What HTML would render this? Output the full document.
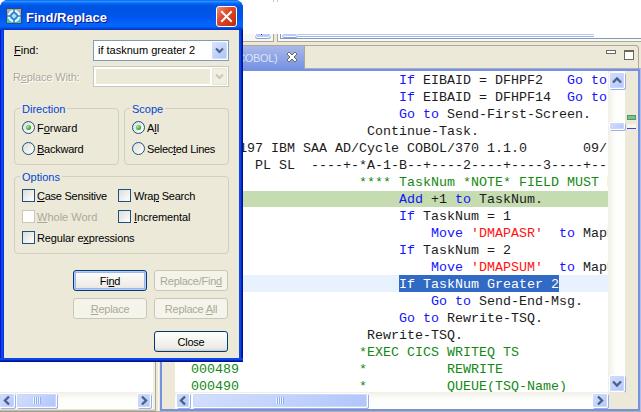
<!DOCTYPE html>
<html><head><meta charset="utf-8"><title>Find/Replace</title>
<style>
*{box-sizing:border-box;margin:0;padding:0}
html,body{width:641px;height:412px;overflow:hidden;background:#fff}
body{position:relative;font-family:"Liberation Sans",sans-serif;font-size:11px;color:#000}
.a{position:absolute}
/* ---------- background workbench ---------- */
#wb{left:0;top:0;width:641px;height:412px;background:#ece9d8}
.ed{font-family:"Liberation Mono",monospace;font-size:13.333px;line-height:17px;white-space:pre;color:#1c1c1c}
.ed .r{position:absolute;left:0;height:17px;width:434px}
.ed .r span{position:absolute;top:1px}
.k{color:#1414ff}.g{color:#148a14}.s{color:#ff1414}
.sbb{position:absolute;width:14px;height:15px;border:1px solid #fff;border-radius:2px;background:linear-gradient(135deg,#d3defb 0%,#c3d3fd 50%,#b1c5f8 100%);box-shadow:inset 0 0 0 1px #c9d7fc,1px 1px 0 #9db0e6}
.grip{position:absolute;width:8px;height:7px;background:repeating-linear-gradient(to right,#eef4fe 0,#eef4fe 1px,#8cb0f8 1px,#8cb0f8 2px)}
/* ---------- dialog ---------- */
#dlg{z-index:5;left:0;top:0;width:243px;height:362px;background:#0831d9;border-radius:8px 8px 0 0;overflow:hidden}
#tb{left:0;top:0;width:243px;height:30px;background:linear-gradient(to bottom,#0058ee 0%,#3593ff 4%,#288eff 6%,#127dff 8%,#036ffc 10%,#0262ee 14%,#0057e5 20%,#0054e3 24%,#0055eb 56%,#005bf5 66%,#0266fc 80%,#0260f4 90%,#0050e0 93%,#0a3cd2 96%,#0730c4 100%)}
#body{left:4px;top:30px;width:235px;height:328px;background:#ece9d8}
#bl{left:0;top:30px;width:4px;height:332px;background:linear-gradient(to right,#0019cf 0,#0019cf 1px,#0a46ea 1px,#0a46ea 3px,#0831d9 3px)}
#br{left:239px;top:30px;width:4px;height:332px;background:linear-gradient(to right,#0a46ea 0,#0a46ea 2px,#0326b8 2px,#0326b8 3px,#00138c 3px)}
#bb{left:0;top:358px;width:243px;height:4px;background:linear-gradient(to bottom,#0a46ea 0,#0a46ea 2px,#0326b8 2px,#0326b8 3px,#00138c 3px)}
#ttl{left:26px;top:10px;font-weight:bold;font-size:13px;line-height:16px;color:#fff;text-shadow:1px 1px 0 #0f1089;white-space:nowrap}
.lb{position:absolute;white-space:nowrap;line-height:13px;height:13px}
.dis{color:#aca899}
u{text-decoration:underline;text-underline-offset:1px}
.grp{position:absolute;border:1px solid #d0d0bf;border-radius:4px}
.gl{position:absolute;color:#0046d5;background:#ece9d8;padding:0 2px;line-height:13px;white-space:nowrap}
.btn{position:absolute;width:74px;height:21px;letter-spacing:-.25px;border:1px solid #003c74;border-radius:3px;background:linear-gradient(to bottom,#fff 0%,#f4f3ee 50%,#ecebe5 85%,#d6d0c5 100%);text-align:center;line-height:21px}
.btn.def{box-shadow:inset 0 0 0 1px #b5cdf7,inset 0 0 0 2px #9ab8ee}
.btn.d{border-color:#c9c7ba;background:#f5f4ea;color:#aca899}
.cb{position:absolute;width:13px;height:13px;border:1px solid #1c5180;background:linear-gradient(135deg,#dcdcd7 0%,#fff 100%)}
.cb.d{border-color:#cac8bb;background:#fff}
.rb{position:absolute;width:13px;height:13px;border:1px solid #1c5180;border-radius:50%;background:linear-gradient(135deg,#dcdcd7 0%,#fff 100%)}
.rb.on::after{content:"";position:absolute;left:3px;top:3px;width:5px;height:5px;border-radius:50%;background:radial-gradient(circle at 35% 35%,#a8f0a0 0%,#21a121 70%)}
</style></head><body>
<div id="wb" class="a">
  <!-- top white area -->
  <div class="a" style="left:0;top:0;width:641px;height:34px;background:#fff"></div>
  <div class="a" style="left:273px;top:0;width:1px;height:2px;background:#c8c5b4"></div><div class="a" style="left:277px;top:0;width:1px;height:2px;background:#c8c5b4"></div>
  <!-- cut-off panels above the editor -->
  <div class="a" style="left:242px;top:34px;width:399px;height:8px;overflow:hidden;background:#ece9d8">
    <div class="a" style="left:0;top:0;width:32px;height:8px;background:#f7f6f1;border-right:1px solid #aca899;border-bottom:1px solid #aca899"></div>
    <div class="a" style="left:13px;top:-4px;width:16px;height:8px;border:1px solid #fff;border-radius:3px;background:#b9cbf8;box-shadow:0 1px 0 #8a9fd8"></div>
    <div class="a" style="left:19px;top:0;width:1px;height:1px;background:#333"></div>
    <div class="a" style="left:35px;top:0;width:364px;height:8px;background:#fbfaf6;border-left:1px solid #aca899;border-bottom:1px solid #aca899"></div>
    <div class="a" style="left:38px;top:0;width:361px;height:5px;border-left:1px solid #7f9db9;border-bottom:1px solid #7f9db9;background:#fff"></div>
    <div class="a" style="left:40px;top:-5px;width:16px;height:8px;border:1px solid #fff;border-radius:3px;background:#b9cbf8;box-shadow:0 1px 0 #8a9fd8"></div>
    <div class="a" style="left:56px;top:0;width:296px;height:3px;border-top:1px solid #b4c6f3;border-bottom:1px solid #9db3ea;background:#fff"></div>
  </div>
  <!-- editor tab strip -->
  <div class="a" style="left:242px;top:45px;width:397px;height:24px;border-top:1px solid #aca899;border-right:1px solid #aca899;border-top-right-radius:4px;background:#ece9d8"></div>
  <div class="a" style="left:242px;top:46px;width:62px;height:23px;z-index:1;background:linear-gradient(to bottom,#aab8e8,#7592e2)"></div>
  <div class="a" style="left:304px;top:46px;width:1px;height:22px;background:#aca899"></div>
  <div class="a" style="left:237px;top:52px;z-index:2;color:#dbe4fa;font-size:11px;line-height:13px;letter-spacing:-.3px">COBOL)</div>
  <svg class="a" style="left:286px;top:51px;z-index:2" width="12" height="12" viewBox="0 0 12 12"><path d="M1 3L3 1 6 4 9 1 11 3 8 6 11 9 9 11 6 8 3 11 1 9 4 6z" fill="#fff" stroke="#6b6b5f" stroke-width="1" stroke-linejoin="round"/></svg>
  <div class="a" style="left:606px;top:50px;width:10px;height:4px;border:1px solid #6a6a60;background:#fff"></div>
  <div class="a" style="left:624px;top:50px;width:10px;height:10px;border:1px solid #6a6a60;border-top-width:2px;background:#fff"></div>
  <!-- editor frame -->
  <div class="a" style="left:156px;top:411px;width:485px;height:1px;background:#b5b2a2"></div>
  <div class="a" style="left:160px;top:68px;width:481px;height:343px;background:#7592e2;border-top:1px solid #a9aec6;border-right:1px solid #b3bfe6"></div>
  <div class="a" style="left:162px;top:71px;width:476px;height:338px;background:#fff"></div>
  <div class="a" style="left:162px;top:71px;width:13px;height:338px;background:#ece9d8"></div>
  <div class="a" style="left:625px;top:71px;width:13px;height:338px;background:#ece9d8"></div>

  <!-- vertical scrollbar -->
  <div class="a" style="left:608px;top:71px;width:17px;height:321px;background:linear-gradient(to right,#f0efe6 0%,#fdfdfb 40%,#fefefc 100%)"></div>
  <div class="sbb" style="left:609px;top:72px;width:16px;height:17px"></div>
  <svg class="a" style="left:609px;top:72px" width="16" height="17" viewBox="0 0 16 17"><path d="M4 10.5L8 6.5l4 4" fill="none" stroke="#4d6185" stroke-width="2.4"/></svg>
  <div class="sbb" style="left:609px;top:375px;width:16px;height:17px"></div>
  <svg class="a" style="left:609px;top:375px" width="16" height="17" viewBox="0 0 16 17"><path d="M4 6.5L8 10.5l4-4" fill="none" stroke="#4d6185" stroke-width="2.4"/></svg>
  <div class="sbb" style="left:609px;top:122px;width:16px;height:8px"></div>
  <!-- overview ruler marks -->
  <div class="a" style="left:627px;top:115px;width:9px;height:5px;background:#7fbf8f;border:1px solid #4a9a66"></div>
  <div class="a" style="left:627px;top:124px;width:9px;height:5px;background:#f4f6f0;border-bottom:1px solid #3a4ad8"></div>
  <!-- horizontal scrollbar (editor) -->
  <div class="a" style="left:175px;top:392px;width:434px;height:17px;background:linear-gradient(to bottom,#f0efe6 0%,#fdfdfb 40%,#fefefc 100%)"></div>
  <div class="a" style="left:609px;top:392px;width:16px;height:17px;background:#ece9d8"></div>
  <div class="sbb" style="left:176px;top:393px"></div>
  <svg class="a" style="left:176px;top:393px" width="14" height="15" viewBox="0 0 14 15"><path d="M9 3.5L5 7.5 9 11.5" fill="none" stroke="#4d6185" stroke-width="2.4"/></svg>
  <div class="sbb" style="left:592px;top:393px;width:16px"></div>
  <svg class="a" style="left:593px;top:393px" width="14" height="15" viewBox="0 0 14 15"><path d="M5 3.5L9 7.5 5 11.5" fill="none" stroke="#4d6185" stroke-width="2.4"/></svg>
  <div class="sbb" style="left:192px;top:393px;width:176px"></div>
  <div class="grip" style="left:276px;top:397px"></div>
  <!-- left panel -->
  <div class="a" style="left:0;top:362px;width:153px;height:47px;background:#fff"></div>
  <div class="a" style="left:153px;top:362px;width:2px;height:47px;background:#f1efe4"></div>
  <div class="a" style="left:0;top:392px;width:153px;height:17px;background:linear-gradient(to bottom,#f0efe6 0%,#fdfdfb 40%,#fefefc 100%)"></div>
  <div class="sbb" style="left:-1px;top:393px;width:16px"></div>
  <svg class="a" style="left:0;top:393px" width="14" height="15" viewBox="0 0 14 15"><path d="M9 3.5L5 7.5 9 11.5" fill="none" stroke="#4d6185" stroke-width="2.4"/></svg>
  <div class="sbb" style="left:137px;top:393px"></div>
  <svg class="a" style="left:137px;top:393px" width="14" height="15" viewBox="0 0 14 15"><path d="M5 3.5L9 7.5 5 11.5" fill="none" stroke="#4d6185" stroke-width="2.4"/></svg>
  <div class="sbb" style="left:16px;top:393px;width:41px"></div>
  <div class="grip" style="left:33px;top:397px"></div>
  <div class="a" style="left:0;top:409px;width:156px;height:3px;background:linear-gradient(to bottom,#e6e3d6 0,#e6e3d6 1px,#c0bdae 1px,#c0bdae 2px,#a29f8f 2px)"></div>
  <div class="a" style="left:155px;top:362px;width:1px;height:48px;background:#aca899"></div>
  <div class="a" style="left:158px;top:362px;width:1px;height:49px;background:#f8f7f0"></div>
  <!-- editor text -->
  <div class="a ed" style="left:175px;top:71px;width:433px;height:321px;overflow:hidden">
    <div class="r" style="top:120px;height:16px;background:#c5dbb0"></div>
    <div class="r" style="top:204px;background:#e8f2fe"></div>
    <div class="r" style="top:0"><span class="k" style="left:224px">If</span><span style="left:248px">EIBAID = DFHPF2</span><span class="k" style="left:392px">Go to</span></div>
    <div class="r" style="top:17px"><span class="k" style="left:224px">If</span><span style="left:248px">EIBAID = DFHPF14</span><span class="k" style="left:392px">Go to</span></div>
    <div class="r" style="top:34px"><span class="k" style="left:224px">Go to</span><span style="left:272px">Send-First-Screen.</span></div>
    <div class="r" style="top:51px"><span style="left:192px">Continue-Task.</span></div>
    <div class="r" style="top:68px"><span style="left:24px">5688-197 IBM SAA AD/Cycle COBOL/370 1.1.0       09/</span></div>
    <div class="r" style="top:85px"><span style="left:80px">PL SL  ----+-*A-1-B--+----2----+----3----+--</span></div>
    <div class="r" style="top:102px"><span class="g" style="left:184px">**** TaskNum *NOTE* FIELD MUST BE</span></div>
    <div class="r" style="top:119px"><span class="k" style="left:224px">Add</span><span style="left:256px">+1</span><span class="k" style="left:280px">to</span><span style="left:304px">TaskNum.</span></div>
    <div class="r" style="top:136px"><span class="k" style="left:224px">If</span><span style="left:248px">TaskNum = 1</span></div>
    <div class="r" style="top:153px"><span class="k" style="left:256px">Move</span><span class="s" style="left:296px">'DMAPASR'</span><span class="k" style="left:384px">to</span><span style="left:408px">MapName</span></div>
    <div class="r" style="top:170px"><span class="k" style="left:224px">If</span><span style="left:248px">TaskNum = 2</span></div>
    <div class="r" style="top:187px"><span class="k" style="left:256px">Move</span><span class="s" style="left:296px">'DMAPSUM'</span><span class="k" style="left:384px">to</span><span style="left:408px">MapName</span></div>
    <div class="r" style="top:204px"><span style="left:224px;top:0;width:160px;height:17px;line-height:19px;background:#316ac5;color:#fff">If TaskNum Greater 2</span></div>
    <div class="r" style="top:221px"><span class="k" style="left:256px">Go to</span><span style="left:304px">Send-End-Msg.</span></div>
    <div class="r" style="top:238px"><span class="k" style="left:224px">Go to</span><span style="left:272px">Rewrite-TSQ.</span></div>
    <div class="r" style="top:255px"><span style="left:192px">Rewrite-TSQ.</span></div>
    <div class="r" style="top:272px"><span class="g" style="left:184px">*EXEC CICS WRITEQ TS</span></div>
    <div class="r" style="top:289px"><span class="g" style="left:16px">000489</span><span class="g" style="left:184px">*          REWRITE</span></div>
    <div class="r" style="top:306px"><span class="g" style="left:16px">000490</span><span class="g" style="left:184px">*          QUEUE(TSQ-Name)</span></div>
  </div>
</div>

<div id="dlg" class="a">
  <div id="tb" class="a"></div>
  <div id="ttl" class="a">Find/Replace</div>
  <div id="bl" class="a"></div><div id="br" class="a"></div><div id="bb" class="a"></div>
  <div id="body" class="a"></div>

  <!-- app icon -->
  <svg class="a" style="left:6px;top:8px" width="16" height="16" viewBox="0 0 16 16">
    <defs><linearGradient id="ig" x1="0" y1="0" x2="0" y2="1"><stop offset="0" stop-color="#a3b4cc"/><stop offset=".5" stop-color="#5f9fd8"/><stop offset=".55" stop-color="#4fc4f0"/><stop offset="1" stop-color="#3fb4ea"/></linearGradient></defs>
    <rect x="0.5" y="0.5" width="15" height="15" fill="url(#ig)" stroke="#3e4a5a"/>
    <circle cx="8" cy="8" r="5.2" fill="none" stroke="#eef8ff" stroke-width="2"/>
    <path d="M8 1v14M1 8h14" stroke="#3a86cc" stroke-width="1.6"/>
    <path d="M8 4.2L11.8 8 8 11.8 4.2 8z" fill="#a5e4fa" stroke="#2f7cc4" stroke-width="1.4"/>
  </svg>
  <!-- close button -->
  <div class="a" style="left:216px;top:6px;width:21px;height:21px;border:1px solid #fff;border-radius:3px;background:linear-gradient(135deg,#ec9078 0%,#e0492a 40%,#c8370f 80%,#b02f0c 100%)"></div>
  <svg class="a" style="left:216px;top:6px" width="21" height="21" viewBox="0 0 21 21"><path d="M6 6l9 9M15 6l-9 9" stroke="#fff" stroke-width="2" stroke-linecap="square"/></svg>

  <!-- Find row -->
  <div class="lb" style="left:14px;top:44px"><u>F</u>ind:</div>
  <div class="a" style="left:93px;top:40px;width:136px;height:21px;border:1px solid #7f9db9;background:#fff"></div>
  <div class="lb" style="left:98px;top:44px">if tasknum greater 2</div>
  <div class="a" style="left:212px;top:42px;width:15px;height:17px;border-radius:2px;background:linear-gradient(135deg,#dbe6fd 0%,#c1d2fb 50%,#aec3f5 100%);box-shadow:inset 0 0 0 1px #cfdcfb"></div>
  <svg class="a" style="left:212px;top:42px" width="15" height="17" viewBox="0 0 15 17"><path d="M4 6.5l3.5 3.5 3.5-3.5" fill="none" stroke="#4d6185" stroke-width="2"/></svg>
  <!-- Replace row -->
  <div class="lb dis" style="left:13px;top:71px;letter-spacing:-.15px;text-shadow:1px 1px 0 #fff">R<u>e</u>place With:</div>
  <div class="a" style="left:93px;top:66px;width:136px;height:21px;border:1px solid #c9c7ba;background:#fff"></div>
  <div class="a" style="left:96px;top:69px;width:114px;height:15px;background:#ece9d8"></div>
  <div class="a" style="left:212px;top:68px;width:15px;height:17px;border-radius:2px;background:#f1efe2;box-shadow:inset 0 0 0 1px #e6e4d6"></div>
  <svg class="a" style="left:212px;top:68px" width="15" height="17" viewBox="0 0 15 17"><path d="M4 6.5l3.5 3.5 3.5-3.5" fill="none" stroke="#c9c7ba" stroke-width="2"/></svg>

  <!-- Direction -->
  <div class="grp" style="left:14px;top:108px;width:105px;height:57px"></div>
  <div class="gl" style="left:20px;top:103px">Direction</div>
  <div class="rb on" style="left:22px;top:121px"></div><div class="lb" style="left:37px;top:122px">F<u>o</u>rward</div>
  <div class="rb" style="left:22px;top:142px"></div><div class="lb" style="left:37px;top:143px;letter-spacing:-.25px"><u>B</u>ackward</div>
  <!-- Scope -->
  <div class="grp" style="left:124px;top:108px;width:105px;height:57px"></div>
  <div class="gl" style="left:130px;top:103px">Scope</div>
  <div class="rb on" style="left:132px;top:121px"></div><div class="lb" style="left:147px;top:122px">A<u>l</u>l</div>
  <div class="rb" style="left:132px;top:142px"></div><div class="lb" style="left:147px;top:143px;letter-spacing:-.3px">Selec<u>t</u>ed Lines</div>
  <!-- Options -->
  <div class="grp" style="left:14px;top:176px;width:215px;height:78px"></div>
  <div class="gl" style="left:20px;top:171px">Options</div>
  <div class="cb" style="left:22px;top:189px"></div><div class="lb" style="left:37px;top:190px;letter-spacing:-.25px"><u>C</u>ase Sensitive</div>
  <div class="cb" style="left:118px;top:189px"></div><div class="lb" style="left:134px;top:190px;letter-spacing:-.27px">Wra<u>p</u> Search</div>
  <div class="cb d" style="left:22px;top:210px"></div><div class="lb dis" style="left:37px;top:211px"><u>W</u>hole Word</div>
  <div class="cb" style="left:118px;top:210px"></div><div class="lb" style="left:134px;top:211px;letter-spacing:-.1px"><u>I</u>ncremental</div>
  <div class="cb" style="left:22px;top:231px"></div><div class="lb" style="left:37px;top:232px;letter-spacing:-.15px">Regular e<u>x</u>pressions</div>
  <!-- buttons -->
  <div class="btn def" style="left:73px;top:270px">Fi<u>n</u>d</div>
  <div class="btn d" style="left:154px;top:270px">Replace/Fin<u>d</u></div>
  <div class="btn d" style="left:73px;top:298px"><u>R</u>eplace</div>
  <div class="btn d" style="left:154px;top:298px">Replace <u>A</u>ll</div>
  <div class="btn" style="left:154px;top:331px">Close</div>
</div>
</body></html>
